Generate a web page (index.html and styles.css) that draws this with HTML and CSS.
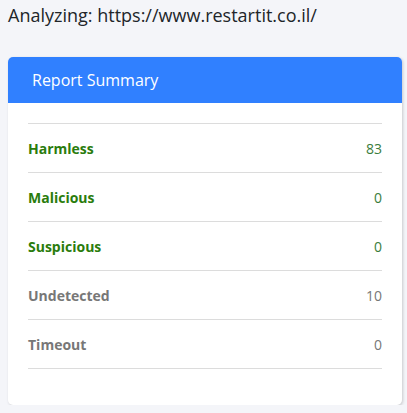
FILE: index.html
```html
<!DOCTYPE html>
<html>
<head>
<meta charset="utf-8">
<link rel="stylesheet" href="styles.css">
</head>
<body>
<div class="title">Analyzing: https://www.restartit.co.il/</div>
<div class="card">
  <div class="card-header">Report Summary</div>
  <div class="card-body">
    <div class="row"><span class="label green">Harmless</span><span class="num green-num">83</span></div>
    <div class="row"><span class="label green">Malicious</span><span class="num green-num">0</span></div>
    <div class="row"><span class="label green">Suspicious</span><span class="num green-num">0</span></div>
    <div class="row"><span class="label gray">Undetected</span><span class="num gray-num">10</span></div>
    <div class="row"><span class="label gray">Timeout</span><span class="num gray-num">0</span></div>
  </div>
</div>
</body>
</html>
```
FILE: styles.css
```css
html, body {
  margin: 0;
  padding: 0;
  background: #f4f5f9;
}
body {
  padding: 0 5px 0 8px;
  font-family: "Open Sans", "Noto Sans", sans-serif;
  color: #212529;
}
.title {
  font-size: 18px;
  line-height: 30px;
  height: 30px;
  margin-bottom: 27px;
}
.card {
  background: #fff;
  border-radius: 5px;
  box-shadow: 1px 1px 3px rgba(0,0,0,0.18);
  overflow: hidden;
  height: 348px;
}
.card-header {
  background: #3080ff;
  color: #fff;
  font-size: 16px;
  height: 46px;
  line-height: 46px;
  padding: 0 24px;
}
.card-body {
  padding: 20px 20px;
}
.row {
  display: flex;
  justify-content: space-between;
  align-items: center;
  height: 48px;
  border-top: 1px solid #dcdcdc;
  font-size: 14px;
}
.row:last-child {
  border-bottom: 1px solid #dcdcdc;
}
.label {
  font-weight: 700;
}
.green { color: #2a7c0c; }
.gray { color: #777777; }
.green-num { color: #3a7d3c; }
.gray-num { color: #777777; }
```
